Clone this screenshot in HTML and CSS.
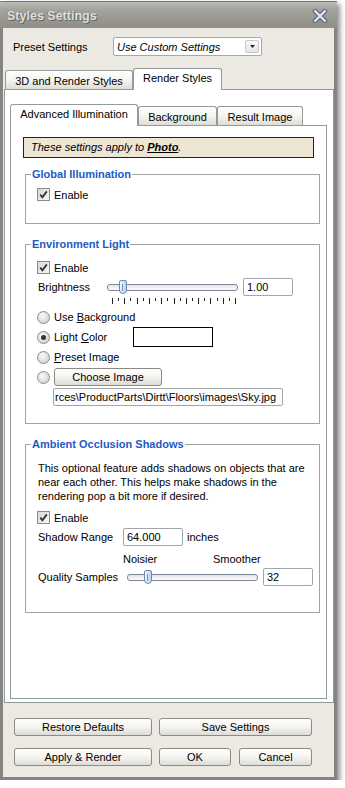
FILE: index.html
```html
<!DOCTYPE html>
<html lang="en">
<head>
    <meta charset="UTF-8">
    <meta name="viewport" content="width=device-width, initial-scale=1.0">
    <title>Styles Settings</title>
    <link rel="stylesheet" href="styles.css">
</head>
<body>
    <div class="window">
        <div class="titlebar">
            <span class="title">Styles Settings</span>
            <svg class="close" width="16" height="14" viewBox="0 0 16 14">
                <path d="M3 2L13 12M13 2L3 12" stroke="#5f6b79" stroke-width="4.6" stroke-linecap="round"/>
                <path d="M3 2L13 12M13 2L3 12" stroke="#dfe8f2" stroke-width="2.4" stroke-linecap="round"/>
            </svg>
        </div>

        <div class="client">
            <div class="preset-row">
                <span class="preset-label">Preset Settings</span>
                <div class="combo">
                    <span class="combo-text">Use Custom Settings</span>
                    <span class="combo-btn">
                        <svg width="5" height="3" viewBox="0 0 5 3"><path d="M0 0h5L2.5 3z" fill="#222"/></svg>
                    </span>
                </div>
            </div>

            <div class="tab-strip outer-strip">
                <div class="tab tab-3d">3D and Render Styles</div>
                <div class="tab active tab-render">Render Styles</div>
            </div>

            <div class="outer-panel">
                <div class="tab-strip inner-strip">
                    <div class="tab active tab-adv">Advanced Illumination</div>
                    <div class="tab tab-bg">Background</div>
                    <div class="tab tab-result">Result Image</div>
                </div>

                <div class="inner-panel">
                    <div class="notice">These settings apply to <b><u>Photo</u></b>.</div>

                    <!-- Global Illumination -->
                    <fieldset class="group group-gi">
                        <legend>Global Illumination</legend>
                        <div class="check-row">
                            <span class="checkbox checked"><svg width="13" height="13" viewBox="0 0 13 13"><path d="M3.2 6.6L5.4 9.2L9.8 3.4" fill="none" stroke="#333" stroke-width="1.8"/></svg></span>
                            <span>Enable</span>
                        </div>
                    </fieldset>

                    <!-- Environment Light -->
                    <fieldset class="group group-env">
                        <legend>Environment Light</legend>
                        <div class="check-row">
                            <span class="checkbox checked"><svg width="13" height="13" viewBox="0 0 13 13"><path d="M3.2 6.6L5.4 9.2L9.8 3.4" fill="none" stroke="#333" stroke-width="1.8"/></svg></span>
                            <span>Enable</span>
                        </div>
                        <div class="field-row brightness-row">
                            <span class="field-label brightness-label">Brightness</span>
                            <div class="slider-block">
                                <div class="slider">
                                    <div class="track"></div>
                                    <div class="thumb" style="left: 12px;"></div>
                                </div>
                                <svg class="ticks" width="131" height="6" viewBox="0 0 131 6">
                                    <path d="M5.5 0v6M11.5 0v3M17.5 0v6M23.5 0v3M30.5 0v6M36.5 0v3M42.5 0v6M48.5 0v3M54.5 0v6M60.5 0v3M67.5 0v6M73.5 0v3M79.5 0v6M85.5 0v3M91.5 0v6M97.5 0v3M103.5 0v6M110.5 0v3M116.5 0v6M122.5 0v3M128.5 0v6" stroke="#222" stroke-width="1"/>
                                </svg>
                            </div>
                            <div class="textbox brightness-box">1.00</div>
                        </div>

                        <div class="radio-list">
                            <div class="radio-row">
                                <span class="radio"></span>
                                <span>Use <u>B</u>ackground</span>
                            </div>
                            <div class="radio-row">
                                <span class="radio selected"></span>
                                <span class="light-label">Light <u>C</u>olor</span>
                                <span class="color-swatch"></span>
                            </div>
                            <div class="radio-row">
                                <span class="radio"></span>
                                <span><u>P</u>reset Image</span>
                            </div>
                            <div class="radio-row">
                                <span class="radio"></span>
                                <button class="btn choose-btn">Choose Image</button>
                            </div>
                        </div>
                        <div class="textbox path-box">rces\ProductParts\Dirtt\Floors\images\Sky.jpg</div>
                    </fieldset>

                    <!-- Ambient Occlusion -->
                    <fieldset class="group group-ao">
                        <legend>Ambient Occlusion Shadows</legend>
                        <p class="ao-text">This optional feature adds shadows on objects that are near each other. This helps make shadows in the rendering pop a bit more if desired.</p>
                        <div class="check-row ao-enable">
                            <span class="checkbox checked"><svg width="13" height="13" viewBox="0 0 13 13"><path d="M3.2 6.6L5.4 9.2L9.8 3.4" fill="none" stroke="#333" stroke-width="1.8"/></svg></span>
                            <span>Enable</span>
                        </div>
                        <div class="field-row range-row">
                            <span class="field-label range-label">Shadow Range</span>
                            <div class="textbox range-box">64.000</div>
                            <span class="unit">inches</span>
                        </div>
                        <div class="scale-labels">
                            <span class="scale-low">Noisier</span>
                            <span>Smoother</span>
                        </div>
                        <div class="field-row quality-row">
                            <span class="field-label quality-label">Quality Samples</span>
                            <div class="slider quality-slider">
                                <div class="track"></div>
                                <div class="thumb" style="left: 17px;"></div>
                            </div>
                            <div class="textbox quality-box">32</div>
                        </div>
                    </fieldset>
                </div>
            </div>

            <div class="button-row row-top">
                <button class="btn btn-restore">Restore Defaults</button>
                <button class="btn btn-save">Save Settings</button>
            </div>
            <div class="button-row row-bottom">
                <button class="btn btn-apply">Apply &amp; Render</button>
                <button class="btn btn-ok">OK</button>
                <button class="btn btn-cancel">Cancel</button>
            </div>
        </div>
    </div>
</body>
</html>
```

FILE: styles.css
```css
* {
    box-sizing: border-box;
}

body {
    margin: 0;
    background-color: white;
    font-family: "Liberation Sans", Arial, sans-serif;
    font-size: 11px;
    color: #000;
}

.window {
    width: 337px;
    height: 779px;
    margin-top: 1px;
    border: 3px solid #85847e;
    border-top: 1px solid #75746f;
    background-color: #ece9e2;
    box-shadow: 3px 3px 5px rgba(0, 0, 0, 0.45);
    display: flex;
    flex-direction: column;
}

/* title bar */
.titlebar {
    height: 26px;
    margin: 0 -3px;
    padding: 2px 7px 0 7px;
    display: flex;
    align-items: center;
    justify-content: space-between;
    background: linear-gradient(#bdbcb6, #a3a29c 30%, #8e8d87);
}

.title {
    font-size: 12.5px;
    font-weight: bold;
    color: #dedede;
    text-shadow: 1px 1px 0 #6a6964, -1px 0 0 #8a8983;
}

.close {
    margin-right: 2px;
}

.client {
    flex: 1;
    padding-top: 9px;
}

/* preset combo */
.preset-row {
    height: 19px;
    display: flex;
    align-items: center;
}

.preset-label {
    width: 110px;
    padding-left: 10px;
}

.combo {
    width: 149px;
    height: 19px;
    border: 1px solid #a5a9ae;
    border-radius: 2px;
    background-color: white;
    display: flex;
    align-items: center;
    justify-content: space-between;
    padding: 0 2px 0 3px;
}

.combo-text {
    font-style: italic;
}

.combo-btn {
    width: 14px;
    height: 13px;
    border: 1px solid #c3c6ca;
    border-radius: 2px;
    background: linear-gradient(#fafafa, #e4e4e0);
    display: flex;
    align-items: center;
    justify-content: center;
}

/* tabs */
.tab-strip {
    display: flex;
    align-items: flex-end;
}

.outer-strip {
    height: 21px;
    margin-top: 12px;
    padding-left: 2px;
}

.inner-strip {
    height: 21px;
}

.tab {
    height: 19px;
    border: 1px solid #919b9c;
    border-bottom: none;
    border-radius: 3px 3px 0 0;
    background: linear-gradient(#ffffff, #f3f3ef 55%, #dedcd5);
    display: flex;
    align-items: center;
    justify-content: center;
}

.tab.active {
    height: 22px;
    margin-bottom: -1px;
    position: relative;
    z-index: 1;
    background: white;
    padding-bottom: 3px;
}

.tab-3d {
    width: 128px;
    padding-top: 1px;
}

.tab-render {
    width: 89px;
}

.tab-adv {
    width: 128px;
}

.tab-bg {
    width: 79px;
    padding-top: 1px;
}

.tab-result {
    width: 86px;
    padding-top: 1px;
}

.outer-panel {
    width: 330px;
    height: 614px;
    margin-left: 1px;
    border: 1px solid #919b9c;
    background-color: white;
    padding: 14px 0 0 5px;
}

.inner-panel {
    width: 317px;
    height: 574px;
    border: 1px solid #919b9c;
    background-color: white;
    padding-top: 11px;
}

.notice {
    width: 291px;
    height: 21px;
    margin-left: 12px;
    border: 1px solid #222;
    background-color: #efe5d4;
    font-style: italic;
    padding-left: 7px;
    line-height: 19px;
}

/* group boxes */
.group {
    width: 295px;
    min-width: 0;
    margin: 0 0 0 14px;
    border: 1px solid #a3a3a3;
    padding: 0 0 0 11px;
}

.group legend {
    color: #1d5ac4;
    font-weight: bold;
    line-height: 14px;
    padding: 0 1px;
    margin-left: -6px;
}

.group-gi {
    margin-top: 9px;
    padding-top: 7px;
    padding-bottom: 22px;
}

.group-env {
    margin-top: 13px;
    padding-top: 10px;
    padding-bottom: 17px;
}

.group-ao {
    margin-top: 13px;
    padding-top: 10px;
    padding-bottom: 26px;
}

.check-row {
    height: 13px;
    display: flex;
    align-items: center;
    gap: 4px;
}

.checkbox {
    width: 13px;
    height: 13px;
    border: 1px solid #8b8b88;
    background: linear-gradient(135deg, #d9d8d3, #f7f7f5);
    display: flex;
}

.checkbox svg {
    margin: -1px;
}

.field-row {
    display: flex;
    align-items: center;
    height: 18px;
}

.brightness-row {
    margin-top: 4px;
    align-items: flex-start;
}

.field-label {
    padding-left: 1px;
}

.brightness-label {
    width: 70px;
    line-height: 18px;
}

.slider-block {
    width: 131px;
    margin-top: 2px;
    margin-bottom: -8px;
}

.slider {
    position: relative;
    width: 131px;
    height: 14px;
    display: flex;
    align-items: center;
}

.track {
    width: 100%;
    height: 7px;
    border: 1px solid #7b8797;
    border-radius: 3px;
    background: linear-gradient(#e6e6e6, #fbfbfb);
}

.thumb {
    position: absolute;
    top: 0;
    width: 8px;
    height: 14px;
    border: 1px solid #6a8cb4;
    border-radius: 2px 2px 4px 4px;
    background: linear-gradient(to right, #f3f8fd, #bcd3ec);
}

.thumb::after {
    content: "";
    position: absolute;
    left: 2px;
    top: 3px;
    width: 1px;
    height: 7px;
    background-color: #6f8fb5;
}

.ticks {
    display: block;
    margin-top: 4px;
}

.textbox {
    height: 18px;
    border: 1px solid #a2a6ab;
    border-radius: 2px;
    background-color: white;
    padding-left: 3px;
    line-height: 16px;
    white-space: nowrap;
    overflow: hidden;
}

.brightness-box {
    width: 50px;
    margin-left: 5px;
}

.radio-list {
    margin-top: 11px;
}

.radio-row {
    height: 20px;
    display: flex;
    align-items: center;
    gap: 4px;
}

.radio {
    width: 13px;
    height: 13px;
    border-radius: 50%;
    border: 1px solid #8c8c88;
    background: radial-gradient(circle at 40% 35%, #fafaf8, #d6d5d0 75%);
    display: flex;
    align-items: center;
    justify-content: center;
}

.radio.selected::after {
    content: "";
    width: 5px;
    height: 5px;
    border-radius: 50%;
    background-color: #333;
}

.light-label {
    width: 75px;
}

.color-swatch {
    width: 80px;
    height: 20px;
    border: 1px solid #000;
    background-color: white;
}

.btn {
    height: 18px;
    border: 1px solid #8a8a86;
    border-radius: 3px;
    background: linear-gradient(#ffffff, #f4f4f0 50%, #dddcd6);
    font-family: "Liberation Sans", Arial, sans-serif;
    font-size: 11px;
    color: #000;
    padding: 0;
}

.choose-btn {
    width: 108px;
}

.path-box {
    width: 230px;
    margin-top: 1px;
    margin-left: 16px;
    background-color: #fcfcfc;
    padding-left: 1px;
}

.ao-text {
    margin: 0;
    width: 272px;
    padding-left: 1px;
    line-height: 14px;
}

.ao-enable {
    margin-top: 8px;
}

.range-row {
    margin-top: 4px;
}

.range-label {
    width: 86px;
}

.range-box {
    width: 60px;
}

.unit {
    margin-left: 4px;
}

.scale-labels {
    margin-top: 6px;
    height: 14px;
    line-height: 14px;
    padding-left: 86px;
    display: flex;
}

.scale-low {
    width: 90px;
}

.quality-row {
    margin-top: 2px;
}

.quality-label {
    width: 90px;
}

.quality-box {
    width: 50px;
    margin-left: 5px;
}

/* bottom buttons */
.button-row {
    display: flex;
    padding-left: 11px;
    gap: 7px;
}

.row-top {
    margin-top: 15px;
}

.row-bottom {
    margin-top: 12px;
}

.btn-restore,
.btn-apply {
    width: 138px;
}

.btn-save {
    width: 153px;
}

.btn-ok {
    width: 72px;
}

.btn-cancel {
    width: 73px;
    margin-left: 1px;
}
```
